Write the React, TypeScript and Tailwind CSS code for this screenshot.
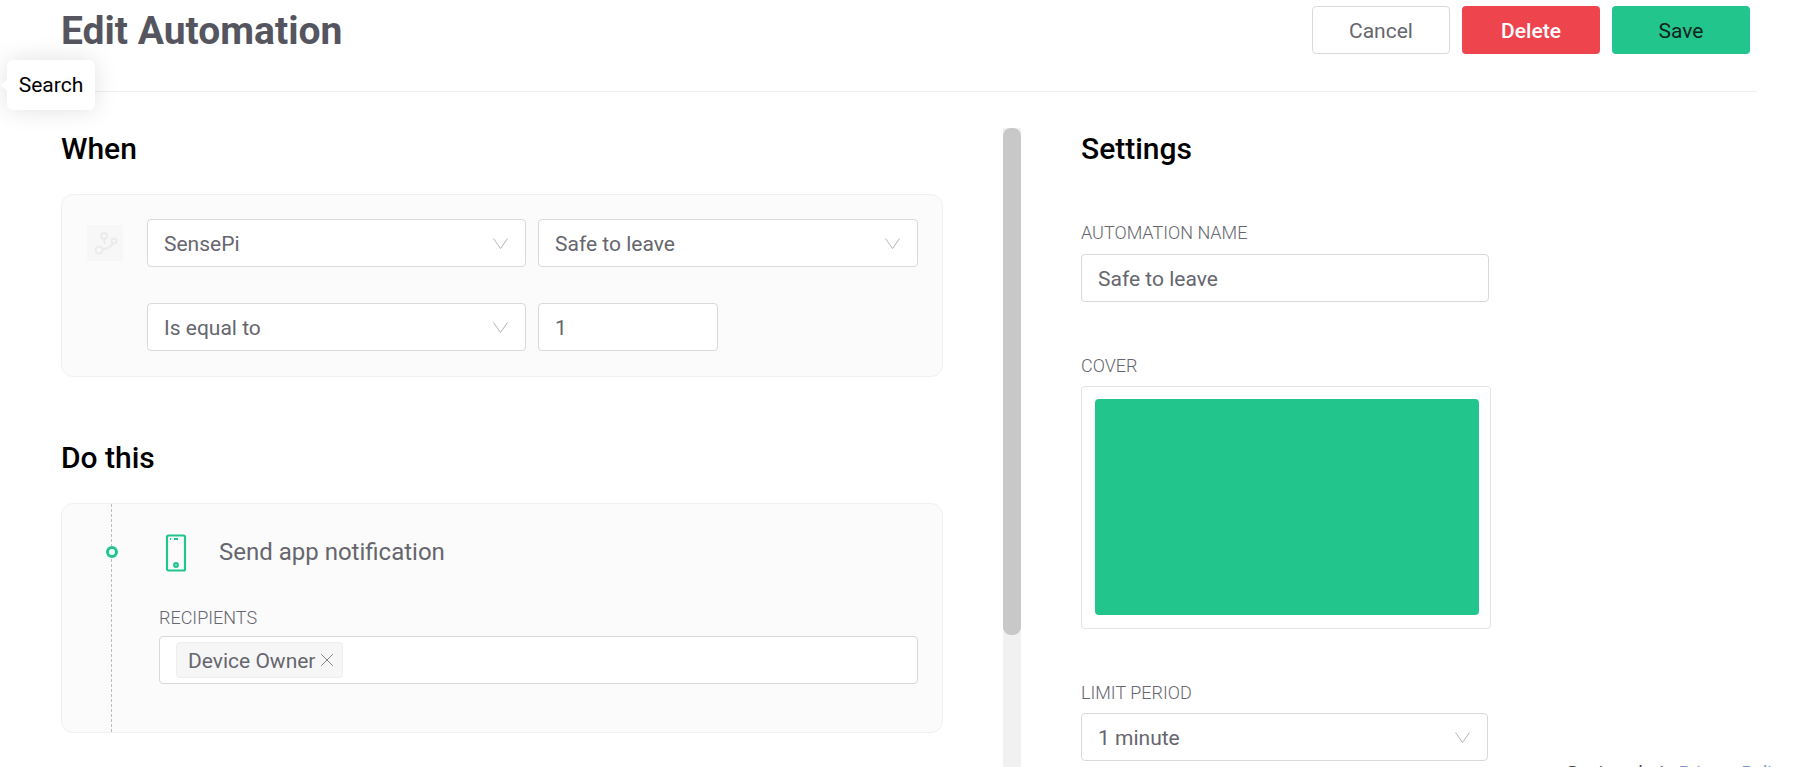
import { X } from 'lucide-react';

const Chevron = () => (
  <svg width="15" height="11" viewBox="0 0 15 11" fill="none" stroke="#b4b4b8" strokeWidth="1" className="shrink-0">
    <path d="M0.5 0.5L7.5 10.5L14.5 0.5" />
  </svg>
);

const SelectBox = ({ label, className }: { label: string; className: string }) => (
  <div className={`h-12 flex items-center justify-between pl-4 pr-[17px] bg-white border border-[#d9d9d9] rounded text-[21px] text-[#66666e] ${className}`}>
    <span className="pt-[3px]">{label}</span>
    <Chevron />
  </div>
);

const TextBox = ({ value, className }: { value: string; className: string }) => (
  <div className={`h-12 flex items-center px-4 pt-[3px] bg-white border border-[#d9d9d9] rounded text-[21px] text-[#66666e] ${className}`}>
    {value}
  </div>
);

const FieldLabel = ({ children }: { children: string }) => (
  <div className="text-lg leading-5 text-[#66666e] font-light uppercase">{children}</div>
);

const PhoneIcon = () => (
  <svg width="22" height="38" viewBox="0 0 22 38" fill="none" stroke="#22c58b" strokeWidth="2.2" className="shrink-0">
    <rect x="2" y="1.5" width="18" height="35" rx="1.5" />
    <path d="M5 5h1M9 5h4" />
    <circle cx="11" cy="31" r="1.8" />
  </svg>
);

const FlowIcon = () => (
  <div className="w-9 h-9 bg-[#f7f7f7] flex items-center justify-center shrink-0">
    <svg width="36" height="36" viewBox="0 0 36 36" fill="none" stroke="#ebebeb" strokeWidth="2">
      <circle cx="17" cy="11" r="3" />
      <circle cx="27" cy="16" r="2.5" />
      <circle cx="12" cy="25" r="3.5" />
      <path d="M17 14l1 5M16 24c4 0 8-2 10-6" />
    </svg>
  </div>
);

export default function App() {
  return (
    <div className="relative h-[767px] overflow-hidden bg-white font-['Roboto',sans-serif]">
      <header className="ml-[61px] mr-[40px] h-[92px] border-b border-[#eeeeee] flex items-start justify-between">
        <h1 className="text-[39px] leading-[62px] font-bold text-[#55555f]">Edit Automation</h1>
        <div className="flex gap-3 pt-1.5 pr-[7px]">
          <button className="w-[138px] h-12 pt-1 rounded border border-[#d9d9d9] bg-white text-[21px] text-[#66666e]">Cancel</button>
          <button className="w-[138px] h-12 pt-1 rounded bg-[#ee444e] text-[21px] font-medium text-white">Delete</button>
          <button className="w-[138px] h-12 pt-1 rounded bg-[#22c58b] text-[21px] text-[#10231c]">Save</button>
        </div>
      </header>

      <div className="flex">
        <main className="w-[1003px] pl-[61px] pr-[60px] shrink-0">
          <h2 className="mt-[41px] text-[30px] leading-8 font-medium text-black">When</h2>
          <section className="mt-[29px] h-[183px] bg-[#fbfbfb] border border-[#f0f0f0] rounded-xl pl-[25px] pr-6 pt-6">
            <div className="flex gap-6">
              <div className="pt-1.5"><FlowIcon /></div>
              <div className="flex flex-col gap-9">
                <div className="flex gap-3">
                  <SelectBox label="SensePi" className="w-[379px]" />
                  <SelectBox label="Safe to leave" className="w-[380px]" />
                </div>
                <div className="flex gap-3">
                  <SelectBox label="Is equal to" className="w-[379px]" />
                  <TextBox value="1" className="w-[180px]" />
                </div>
              </div>
            </div>
          </section>

          <h2 className="mt-[65px] text-[30px] leading-8 font-medium text-black">Do this</h2>
          <section className="mt-[29px] h-[230px] bg-[#fbfbfb] border border-[#f0f0f0] rounded-xl flex">
            <div className="relative w-[50px] border-r border-dashed border-[#bdbdbd] shrink-0">
              <span className="absolute left-[44px] top-[42px] w-3 h-3 rounded-full border-[3px] border-[#22c58b] bg-white" />
            </div>
            <div className="flex-1 pl-[47px] pr-6 pt-[30px]">
              <div className="flex items-center gap-[32px] pl-[6px]">
                <PhoneIcon />
                <span className="text-2xl leading-[36px] pb-0.5 text-[#66666e]">Send app notification</span>
              </div>
              <div className="mt-[36px]">
                <FieldLabel>Recipients</FieldLabel>
              </div>
              <div className="mt-[8px] h-12 w-[759px] bg-white border border-[#d9d9d9] rounded flex items-center pl-4">
                <div className="h-9 flex items-center gap-px pl-[11px] pr-1 bg-[#f6f6f6] border border-[#eeeeee] rounded text-[21px] text-[#66666e]">
                  <span className="pt-1">Device Owner</span>
                  <X size={22} strokeWidth={1} className="text-[#77777d]" />
                </div>
              </div>
            </div>
          </section>
        </main>

        <div className="w-[18px] h-[675px] mt-9 bg-[#f1f1f1] shrink-0">
          <div className="h-[507px] bg-[#c8c8c8] rounded-lg" />
        </div>

        <aside className="pl-[60px] w-[488px] shrink-0">
          <h2 className="mt-[41px] text-[30px] leading-8 font-medium text-black">Settings</h2>
          <div className="mt-[58px]"><FieldLabel>Automation name</FieldLabel></div>
          <TextBox value="Safe to leave" className="mt-[11px] w-[408px]" />
          <div className="mt-[54px]"><FieldLabel>Cover</FieldLabel></div>
          <div className="mt-2.5 w-[410px] h-[243px] bg-white border border-[#e3e3e3] rounded pl-[13px] pr-[11px] pt-3 pb-[13px]">
            <div className="h-full bg-[#22c58b] rounded" />
          </div>
          <div className="mt-[54px]"><FieldLabel>Limit period</FieldLabel></div>
          <SelectBox label="1 minute" className="mt-[10px] w-[407px]" />
        </aside>
      </div>

      <div className="absolute left-[7px] top-[60px] w-[88px] h-[50px] pt-0.5 bg-white rounded-md shadow-[0_0_24px_rgba(0,0,0,0.12)] flex items-center justify-center text-[21px] text-black">
        <span className="absolute -left-1 top-[21px] w-2 h-2 rotate-45 bg-white" />
        Search
      </div>

      <div className="absolute left-[1568px] top-[759px] text-lg leading-7 whitespace-nowrap text-[#444444]">
        Designed <span className="ml-[9px]">1</span> <a className="ml-2 text-[#7b8fc7]">Privacy Policy</a>
      </div>
    </div>
  );
}
